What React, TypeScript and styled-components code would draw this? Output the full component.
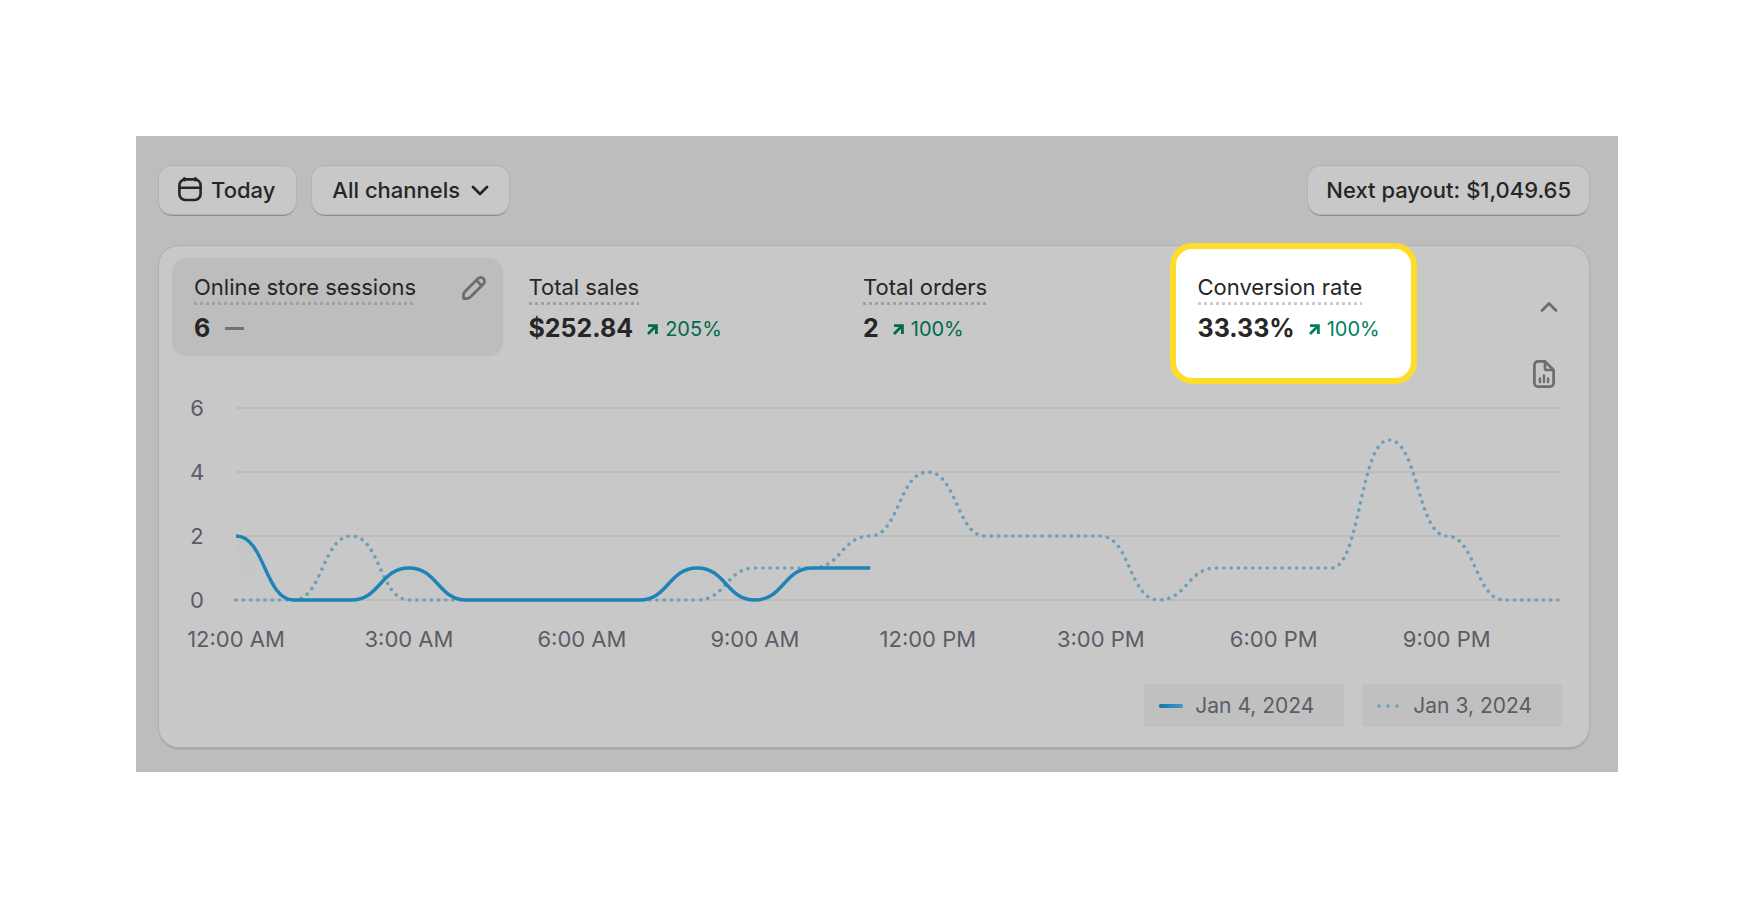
import React from 'react';
import styled, { createGlobalStyle, css } from 'styled-components';

const Global = createGlobalStyle`
  *, *::before, *::after { box-sizing: border-box; }
  body {
    margin: 0;
    background: #fff;
    font-family: Inter, 'Liberation Sans', sans-serif;
    color: #262626;
  }
`;

const Page = styled.main`
  padding: 136px;
`;

const Panel = styled.section`
  background: #bdbdbd;
  padding: 30px 29px 25px 23px;
`;

const Toolbar = styled.div`
  display: flex;
  align-items: center;
  gap: 16px;
`;

const ToolButton = styled.button<{ $end?: boolean; $icon?: boolean }>`
  display: flex;
  align-items: center;
  gap: 11px;
  height: 48px;
  padding: 0 20px;
  border: 0;
  border-radius: 13px;
  background: #c8c8c8;
  box-shadow: 0 0 0 1px #b3b3b3, 0 2px 0 0 #8f8f8f;
  font: 500 22px/28px Inter, 'Liberation Sans', sans-serif;
  color: #262626;
  white-space: nowrap;
  ${(p) => p.$icon && css`gap: 9px; padding: 0 21px 0 19px;`}
  ${(p) => p.$end && css`margin-left: auto; padding: 0 18px;`}
`;

const Card = styled.section`
  margin-top: 32px;
  padding: 12px 27px 20px 13px;
  border-radius: 20px;
  background: #c8c8c8;
  box-shadow: 0 0 0 1px #b0b0b0, 0 2px 2px 0 #9a9a9a;
`;

const MetricRow = styled.div`
  display: flex;
  align-items: flex-start;
  padding-right: 4px;
`;

const Metrics = styled.div`
  flex: 1;
  display: grid;
  grid-template-columns: repeat(4, 1fr);
  gap: 4px;
  margin-right: 34px;
`;

const Metric = styled.div<{ $active?: boolean }>`
  position: relative;
  height: 98px;
  padding: 15px 17px 15px 22px;
  border-radius: 14px;
  background: ${(p) => (p.$active ? '#bdbdbd' : 'transparent')};
`;

const Spotlight = styled.div`
  position: absolute;
  top: -15px;
  left: -6px;
  width: 247px;
  height: 141px;
  border: 6px solid #ffdb2b;
  border-radius: 22px;
  background: #fff;
`;

const MetricHead = styled.div`
  position: relative;
  display: flex;
  justify-content: space-between;
  align-items: flex-start;
`;

const MetricName = styled.span<{ $lit?: boolean }>`
  padding-bottom: 4px;
  background: repeating-linear-gradient(90deg, ${(p) => (p.$lit ? '#ccc' : '#9f9f9f')} 0 3px, transparent 3px 6px) bottom / 100% 3px no-repeat;
  font-size: 22px;
  line-height: 28px;
  white-space: nowrap;
`;

const IconButton = styled.button`
  display: flex;
  padding: 0;
  border: 0;
  background: none;
  color: #6d6d6d;
`;

const EditButton = styled(IconButton)`
  margin-top: 3px;
`;

const MetricValue = styled.div`
  position: relative;
  display: flex;
  align-items: center;
  margin-top: 7px;
  font-size: 25px;
  line-height: 32px;
  font-weight: 650;
  white-space: nowrap;
`;

const Flat = styled.span`
  width: 19px;
  height: 3px;
  margin-left: 15px;
  background: #6b7177;
`;

const Trend = styled.span<{ $lit?: boolean }>`
  display: flex;
  align-items: center;
  gap: 7px;
  margin-left: 14px;
  padding-top: 2px;
  font-size: 20px;
  line-height: 30px;
  font-weight: 400;
  color: ${(p) => (p.$lit ? '#008060' : '#006a4b')};
`;

const CollapseButton = styled(IconButton)`
  margin-top: 43px;
`;

const ReportRow = styled.div`
  display: flex;
  justify-content: flex-end;
  padding-right: 7px;
  margin-top: 4px;
`;

const Chart = styled.div`
  display: grid;
  grid-template-columns: 64px 1fr;
  height: 192px;
  margin-top: 20px;
`;

const YAxis = styled.div`
  display: flex;
  flex-direction: column;
  justify-content: space-between;
  padding-left: 18px;
`;

const Tick = styled.span`
  display: flex;
  align-items: center;
  justify-content: center;
  width: 14px;
  height: 0;
  font-size: 22px;
  line-height: 28px;
  color: #5c5c66;
  white-space: nowrap;
`;

const Plot = styled.svg`
  display: block;
  width: 100%;
  height: 192px;
  overflow: visible;
`;

const XAxis = styled.div`
  display: flex;
  justify-content: space-between;
  width: calc((100% - 64px) * 21 / 23);
  height: 28px;
  margin: 25px 0 0 64px;
`;

const XTick = styled(Tick)`
  width: 0;
  height: 28px;
`;

const Legend = styled.div`
  display: flex;
  justify-content: flex-end;
  gap: 18px;
  margin-top: 31px;
`;

const LegendItem = styled.div`
  display: flex;
  align-items: center;
  gap: 12px;
  height: 43px;
  padding: 0 30px 0 15px;
  border-radius: 4px;
  background: #c0c0c0;
  font-size: 21px;
  line-height: 28px;
  color: #5c5c66;
  white-space: nowrap;
`;

const STEP = 100;
const today = [2, 0, 0, 1, 0, 0, 0, 0, 1, 0, 1, 1];
const yesterday = [0, 0, 2, 0, 0, 0, 0, 0, 0, 1, 1, 2, 4, 2, 2, 2, 0, 1, 1, 1, 5, 2, 0, 0];
const yAt = (v: number) => 192 - v * 32;

function curve(values: number[]) {
  return values
    .map((v, i) => {
      const x = i * STEP;
      if (i === 0) return `M0 ${yAt(v)}`;
      return `C${x - STEP / 2} ${yAt(values[i - 1])} ${x - STEP / 2} ${yAt(v)} ${x} ${yAt(v)}`;
    })
    .join(' ');
}

const CalendarIcon = () => (
  <svg width="24" height="28" viewBox="0 0 24 28" fill="none" stroke="currentColor" strokeWidth="2.6" strokeLinecap="round" aria-hidden="true">
    <rect x="1.4" y="3.4" width="21.2" height="20.6" rx="6" />
    <path d="M1.4 11.8h21.2M6.4 2.2v2M17.4 2.2v2" />
  </svg>
);

const ChevronIcon = ({ up }: { up?: boolean }) => (
  <svg width="18" height="12" viewBox="0 0 18 12" fill="none" stroke="currentColor" strokeWidth="2.8" strokeLinecap="round" strokeLinejoin="round" aria-hidden="true">
    <path d={up ? 'M2 9.5L9 2.5l7 7' : 'M2 3l7 7 7-7'} />
  </svg>
);

const PencilIcon = () => (
  <svg width="24" height="24" viewBox="0 0 24 24" fill="none" stroke="currentColor" strokeWidth="2.8" strokeLinejoin="round" aria-hidden="true">
    <path d="M1.5 22.5v-3.3c0-1.4.5-2.6 1.5-3.6L16 2.6a3.8 3.8 0 0 1 5.4 5.4L8.4 21c-1 1-2.2 1.5-3.6 1.5zM14.6 4.6l4.800 4.800" />
  </svg>
);

const ArrowIcon = () => (
  <svg width="11" height="11" viewBox="0 0 11 11" fill="none" stroke="currentColor" strokeWidth="2.8" aria-hidden="true">
    <path d="M1 1.6h8.4V10M9.2 1.8L1 10" />
  </svg>
);

const ReportIcon = () => (
  <svg width="22" height="28" viewBox="0 0 22 28" fill="none" stroke="currentColor" strokeLinecap="round" strokeLinejoin="round" aria-hidden="true">
    <path strokeWidth="2.7" d="M12 1.4H5A3.6 3.6 0 0 0 1.4 5v18A3.6 3.6 0 0 0 5 26.6h12a3.6 3.6 0 0 0 3.6-3.6V10zM12 1.4V8a2 2 0 0 0 2 2h6.6" />
    <path strokeWidth="2.4" d="M6.9 18.5V22M11 15.5V22M15.1 18.5V22" />
  </svg>
);

type MetricData = { name: string; value: string; trend?: string; active?: boolean; lit?: boolean };

const metrics: MetricData[] = [
  { name: 'Online store sessions', value: '6', active: true },
  { name: 'Total sales', value: '$252.84', trend: '205%' },
  { name: 'Total orders', value: '2', trend: '100%' },
  { name: 'Conversion rate', value: '33.33%', trend: '100%', lit: true },
];

const hours = ['12:00 AM', '3:00 AM', '6:00 AM', '9:00 AM', '12:00 PM', '3:00 PM', '6:00 PM', '9:00 PM'];

export default function App() {
  return (
    <>
      <Global />
      <Page>
        <Panel>
          <Toolbar>
            <ToolButton $icon><CalendarIcon />Today</ToolButton>
            <ToolButton>All channels<ChevronIcon /></ToolButton>
            <ToolButton $end>Next payout: $1,049.65</ToolButton>
          </Toolbar>
          <Card>
            <MetricRow>
              <Metrics>
                {metrics.map((m) => (
                  <Metric key={m.name} $active={m.active}>
                    {m.lit && <Spotlight />}
                    <MetricHead>
                      <MetricName $lit={m.lit}>{m.name}</MetricName>
                      {m.active && <EditButton aria-label="Edit metric"><PencilIcon /></EditButton>}
                    </MetricHead>
                    <MetricValue>
                      {m.value}
                      {m.trend ? <Trend $lit={m.lit}><ArrowIcon />{m.trend}</Trend> : <Flat />}
                    </MetricValue>
                  </Metric>
                ))}
              </Metrics>
              <CollapseButton aria-label="Collapse"><ChevronIcon up /></CollapseButton>
            </MetricRow>
            <ReportRow>
              <IconButton aria-label="View report"><ReportIcon /></IconButton>
            </ReportRow>
            <Chart>
              <YAxis>
                {[6, 4, 2, 0].map((n) => <Tick key={n}>{n}</Tick>)}
              </YAxis>
              <Plot viewBox="0 0 2300 192" preserveAspectRatio="none" fill="none" role="img" aria-label="Online store sessions over time">
                <defs>
                  <linearGradient id="area" x1="0" y1="128" x2="0" y2="192" gradientUnits="userSpaceOnUse">
                    <stop offset="0" stopColor="#1f84b5" stopOpacity="0.03" />
                    <stop offset="1" stopColor="#1f84b5" stopOpacity="0" />
                  </linearGradient>
                </defs>
                {[6, 4, 2, 0].map((n) => (
                  <path key={n} d={`M0 ${yAt(n)}H2300`} stroke="#bcbcbc" strokeWidth="2" vectorEffect="non-scaling-stroke" />
                ))}
                <path d={curve(yesterday)} stroke="#6d9fbc" strokeWidth="3.6" strokeLinecap="round" strokeDasharray="0.01 7.27" vectorEffect="non-scaling-stroke" />
                <path d={`${curve(today)}V192H0Z`} fill="url(#area)" />
                <path d={curve(today)} stroke="#1f84b5" strokeWidth="3.4" vectorEffect="non-scaling-stroke" />
              </Plot>
            </Chart>
            <XAxis>
              {hours.map((h) => <XTick key={h}>{h}</XTick>)}
            </XAxis>
            <Legend>
              <LegendItem>
                <svg width="24" height="4" viewBox="0 0 24 4" aria-hidden="true">
                  <defs>
                    <linearGradient id="key"><stop offset="0" stopColor="#1578a8" /><stop offset="1" stopColor="#3f9cc6" /></linearGradient>
                  </defs>
                  <rect width="24" height="4" rx="1.5" fill="url(#key)" />
                </svg>
                Jan 4, 2024
              </LegendItem>
              <LegendItem>
                <svg width="24" height="4" viewBox="0 0 24 4" fill="#6d9fbc" aria-hidden="true">
                  <circle cx="2" cy="2" r="1.8" /><circle cx="11" cy="2" r="1.8" /><circle cx="20" cy="2" r="1.8" />
                </svg>
                Jan 3, 2024
              </LegendItem>
            </Legend>
          </Card>
        </Panel>
      </Page>
    </>
  );
}
